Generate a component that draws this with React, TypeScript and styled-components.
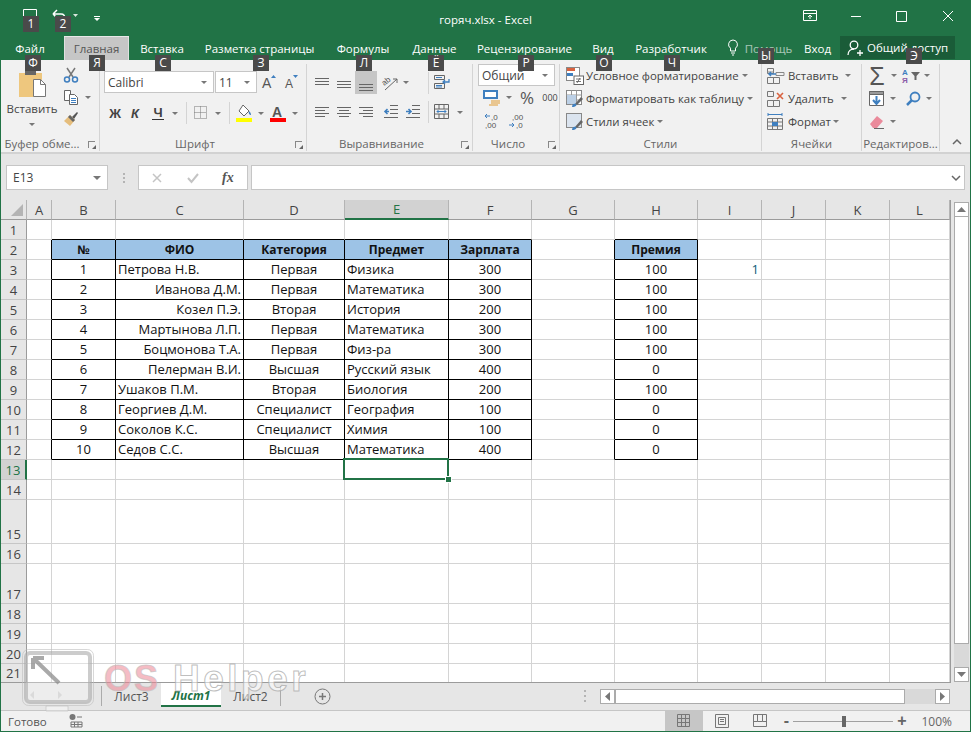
import React from 'react';
import styled, { createGlobalStyle } from 'styled-components';

const GlobalStyle = createGlobalStyle`
  html, body {
    margin: 0;
    padding: 0;
    background: #fff;
    overflow: hidden;
  }
  body {
    font-family: "Open Sans", "Noto Sans", sans-serif;
    font-size: 11.5px;
    color: #444;
  }
`;

const GREEN = '#217346';

const Window = styled.div`
  position: relative;
  width: 971px;
  height: 732px;
  box-sizing: border-box;
  border: 1px solid ${GREEN};
  border-top: 0;
  background: #e6e6e6;
  display: flex;
  flex-direction: column;
  overflow: hidden;
`;

/* title bar */
const TitleBar = styled.div`
  height: 36px;
  margin: 0 -1px;
  background: ${GREEN};
  display: grid;
  grid-template-columns: 1fr auto 1fr;
  align-items: center;
  color: #fff;
`;
const Quick = styled.div`
  display: flex;
  align-items: flex-start;
  align-self: start;
  padding: 9px 0 0 23px;
  gap: 15px;
`;
const DocTitle = styled.div`
  margin-top: 2px;
`;
const WinButtons = styled.div`
  display: flex;
  justify-content: flex-end;
  align-items: center;
  padding: 0 17px 4px 0;
  gap: 33px;
`;

/* tabs */
const TabBar = styled.div`
  height: 24px;
  margin: 0 -1px;
  background: ${GREEN};
  display: flex;
  align-items: stretch;
  padding-left: 14px;
  color: #fff;
`;
const Tab = styled.div<{ $active?: boolean; $w: number; $gap?: number }>`
  width: ${p => p.$w}px;
  margin-right: ${p => p.$gap ?? 0}px;
  display: flex;
  align-items: center;
  justify-content: center;
  white-space: nowrap;
  ${p => p.$active && 'background: #c6c6c6; color: #555; box-shadow: inset 0 1px 0 #e8e8e8, inset 1px 0 0 #e0e0e0, inset -1px 0 0 #e0e0e0;'}
`;
const Faded = styled.span`
  opacity: 0.6;
  margin-left: 6px;
`;
const Lamp = styled.div`
  display: flex;
  align-items: center;
`;
const ShareTab = styled.div`
  width: 115px;
  margin-left: 10px;
  display: flex;
  align-items: center;
  gap: 4px;
  padding-left: 7px;
  box-sizing: border-box;
  background: #1a5c38;
  height: 23px;
`;

/* ribbon */
const Ribbon = styled.div`
  height: 92px;
  background: #f1f1f1;
  border-bottom: 2px solid #d2d2d2;
  box-sizing: content-box;
  display: flex;
  position: relative;
`;
const Group = styled.div<{ $w: number }>`
  position: relative;
  width: ${p => p.$w}px;
  flex: none;
  box-sizing: border-box;
  margin-top: 4px;
  height: 87px;
  border-right: 1px solid #d4d4d4;
  display: flex;
  flex-direction: column;
`;
const GroupBody = styled.div`
  flex: 1;
  display: flex;
  min-height: 0;
`;
const GroupLabel = styled.div<{ $launcher?: boolean }>`
  height: 14px;
  line-height: 14px;
  text-align: center;
  white-space: nowrap;
  color: #666;
  ${p => p.$launcher && 'padding-right: 16px;'}
`;
const Launcher = styled.span`
  position: absolute;
  right: 4px;
  bottom: 3px;
  width: 7px;
  height: 7px;
  border-left: 1px solid #888;
  border-top: 1px solid #888;
  box-sizing: border-box;
  &::after {
    content: '';
    position: absolute;
    right: -1px;
    bottom: -1px;
    width: 0;
    height: 0;
    border-left: 4px solid transparent;
    border-bottom: 4px solid #666;
  }
`;
const Stack = styled.div<{ $w?: number; $top?: number; $gap?: number; $left?: number }>`
  display: flex;
  flex-direction: column;
  flex: none;
  box-sizing: border-box;
  ${p => p.$w && `width: ${p.$w}px;`}
  padding-top: ${p => p.$top ?? 0}px;
  padding-left: ${p => p.$left ?? 0}px;
  gap: ${p => p.$gap ?? 0}px;
`;
const Row = styled.div<{ $h?: number; $left?: number }>`
  display: flex;
  flex: none;
  align-items: center;
  height: ${p => p.$h ?? 23}px;
  padding-left: ${p => p.$left ?? 0}px;
  white-space: nowrap;
`;
const Tool = styled.div<{ $w: number; $h?: number; $on?: boolean; $ml?: number }>`
  width: ${p => p.$w}px;
  height: ${p => p.$h ?? 22}px;
  margin-left: ${p => p.$ml ?? 0}px;
  flex: none;
  display: flex;
  align-items: center;
  justify-content: center;
  ${p => p.$on && 'background: #c6c6c6;'}
`;
const Caret = styled.span<{ $mx?: number; $big?: boolean }>`
  flex: none;
  width: 0;
  height: 0;
  margin: 0 ${p => p.$mx ?? 3}px;
  border-left: ${p => (p.$big ? 4 : 3)}px solid transparent;
  border-right: ${p => (p.$big ? 4 : 3)}px solid transparent;
  border-top: ${p => (p.$big ? 4 : 3)}px solid #777;
`;
const VSep = styled.span`
  width: 1px;
  height: 22px;
  background: #d4d4d4;
  flex: none;
`;
const PasteText = styled.div`
  text-align: center;
  line-height: 16px;
  margin-top: 2px;
`;
const PasteCaret = styled.div`
  display: flex;
  justify-content: center;
  margin-top: 6px;
`;
const ComboBox = styled.div<{ $w: number }>`
  width: ${p => p.$w}px;
  height: 22px;
  box-sizing: border-box;
  background: #fff;
  border: 1px solid #c6c6c6;
  display: flex;
  align-items: center;
  justify-content: space-between;
  padding: 0 3px;
  color: #444;
  margin-right: 1px;
  flex: none;
  font-size: 12px;
`;
const BoldLetter = styled.span<{ $italic?: boolean; $under?: boolean }>`
  font-family: "Liberation Sans", sans-serif;
  font-weight: 700;
  font-size: 13px;
  color: #444;
  ${p => p.$italic && 'font-style: italic;'}
  ${p => p.$under && 'border-bottom: 1px solid #333; line-height: 12px; padding: 0 1px;'}
`;
const Percent = styled.span`
  font-size: 17px;
  color: #555;
`;
const Thousands = styled.span`
  font-size: 9px;
`;
const Sigma = styled.span`
  font-family: "Liberation Sans", sans-serif;
  font-size: 25px;
  line-height: 22px;
  color: #555;
`;
const StyleText = styled.span<{ $w?: number }>`
  margin-left: 2px;
  color: #444;
  font-size: 11.4px;
  ${p => p.$w && `width: ${p.$w}px;`}
`;
const Collapse = styled.div`
  position: absolute;
  right: 8px;
  bottom: 3px;
`;

/* formula bar */
const FormulaBar = styled.div`
  height: 45px;
  display: flex;
  align-items: center;
  padding: 1px 5px 0 5px;
`;
const NameBox = styled.div`
  width: 102px;
  height: 25px;
  box-sizing: border-box;
  background: #fff;
  border: 1px solid #c6c6c6;
  display: flex;
  align-items: center;
  justify-content: space-between;
  padding: 0 3px 0 6px;
  font-size: 12px;
`;
const Dots = styled.div`
  width: 3px;
  display: flex;
  flex-direction: column;
  gap: 2px;
  span {
    display: block;
    width: 2px;
    height: 2px;
    background: #b4b4b4;
  }
`;
const FormulaDots = styled(Dots)`
  margin-left: 15px;
`;
const FxBox = styled.div`
  width: 110px;
  height: 25px;
  box-sizing: border-box;
  background: #fff;
  border: 1px solid #c6c6c6;
  margin: 0 3px 0 12px;
  display: flex;
  align-items: center;
  padding-left: 11px;
  gap: 22px;
`;
const Fx = styled.span`
  font-family: "Liberation Serif", serif;
  font-style: italic;
  font-weight: 700;
  font-size: 14px;
  color: #555;
`;
const FormulaInput = styled.div`
  flex: 1;
  height: 25px;
  box-sizing: border-box;
  background: #fff;
  border: 1px solid #c6c6c6;
  display: flex;
  align-items: center;
  justify-content: flex-end;
  padding-right: 3px;
`;

/* sheet */
const SheetArea = styled.div`
  height: 483px;
  display: flex;
`;
const CellGrid = styled.div`
  display: grid;
  grid-template-columns: 26px 25px 64px 128px 101px 104px 83px 83px 83px 64px 64px 64px 60px;
  grid-template-rows: 20px repeat(14, 20px) 44px 20px 40px 20px 20px 20px 19px;
  width: 949px;
  height: 482px;
  flex: none;
  overflow: hidden;
  border-right: 1px solid #9b9b9b;
  border-bottom: 1px solid #9b9b9b;
  box-sizing: content-box;
`;
const Corner = styled.div`
  background: #e6e6e6;
  border-right: 1px solid #b4b4b4;
  border-bottom: 1px solid #9b9b9b;
  box-sizing: border-box;
  position: relative;
  &::after {
    content: '';
    position: absolute;
    right: 3px;
    bottom: 3px;
    border-left: 12px solid transparent;
    border-bottom: 12px solid #b4b4b4;
  }
`;
const ColHead = styled.div<{ $on?: boolean }>`
  background: ${p => (p.$on ? '#d2d2d2' : '#e6e6e6')};
  color: ${p => (p.$on ? GREEN : '#444')};
  border-right: 1px solid #b4b4b4;
  border-bottom: ${p => (p.$on ? `2px solid ${GREEN}` : '1px solid #9b9b9b')};
  box-sizing: border-box;
  display: flex;
  align-items: center;
  justify-content: center;
  font-size: 13px;
`;
const RowHead = styled.div<{ $on?: boolean }>`
  background: ${p => (p.$on ? '#d2d2d2' : '#e6e6e6')};
  color: ${p => (p.$on ? GREEN : '#444')};
  border-right: ${p => (p.$on ? `2px solid ${GREEN}` : '1px solid #9b9b9b')};
  border-bottom: 1px solid #c6c6c6;
  box-sizing: border-box;
  display: flex;
  align-items: flex-end;
  justify-content: center;
  font-size: 13px;
  line-height: 18px;
`;
const Cell = styled.div<{
  $align: string;
  $head?: boolean;
  $right?: boolean;
  $bottom?: boolean;
  $selected?: boolean;
}>`
  position: relative;
  box-sizing: border-box;
  background: ${p => (p.$head ? '#9dc3e6' : '#fff')};
  border-right: 1px solid ${p => (p.$right ? '#000' : '#d4d4d4')};
  border-bottom: 1px solid ${p => (p.$bottom ? '#000' : '#d4d4d4')};
  display: flex;
  align-items: flex-end;
  justify-content: ${p => p.$align};
  padding: 0 2px;
  font-size: ${p => (p.$head ? 12 : 13)}px;
  line-height: 19px;
  color: #111;
  white-space: nowrap;
  ${p => p.$head && 'font-weight: 700;'}
  ${p =>
    p.$selected &&
    `&::after {
      content: '';
      position: absolute;
      left: -2px;
      top: -2px;
      right: -1px;
      bottom: -1px;
      border: 2px solid ${GREEN};
      z-index: 2;
    }
    &::before {
      content: '';
      position: absolute;
      right: -4px;
      bottom: -4px;
      width: 7px;
      height: 7px;
      background: ${GREEN};
      border: 1px solid #fff;
      box-sizing: border-box;
      z-index: 3;
    }`}
`;
const TealValue = styled.span`
  margin-left: auto;
  color: #0d5c7a;
`;
const VScroll = styled.div`
  width: 15px;
  margin-left: 3px;
  padding-top: 2px;
  box-sizing: border-box;
  display: flex;
  flex-direction: column;
  height: 482px;
`;
const ScrollBtn = styled.div<{ $w?: number; $h?: number }>`
  width: ${p => p.$w ?? 15}px;
  height: ${p => p.$h ?? 15}px;
  flex: none;
  box-sizing: border-box;
  background: #fff;
  border: 1px solid #ababab;
  display: flex;
  align-items: center;
  justify-content: center;
`;
const VThumb = styled.div`
  height: 427px;
  flex: none;
  background: #fff;
  box-sizing: border-box;
  border: 1px solid #ababab;
  border-top: 0;
`;
const VTrack = styled.div`
  flex: 1;
  background: #d9d9d9;
`;

/* sheet tabs */
const SheetTabs = styled.div`
  height: 27px;
  display: flex;
  align-items: flex-start;
  padding-left: 100px;
`;
const SheetTab = styled.div<{ $active?: boolean; $w: number; $plain?: boolean }>`
  width: ${p => p.$w}px;
  height: 20px;
  margin-top: 3px;
  box-sizing: border-box;
  display: flex;
  align-items: center;
  justify-content: center;
  font-size: 12px;
  color: #555;
  border-left: ${p => (p.$plain ? '0' : '1px solid #ababab')};
  ${p =>
    p.$active &&
    `background: #fff;
     height: 24px;
     margin-top: 0;
     color: ${GREEN};
     font-weight: 700;
     font-style: italic;
     border-left: 0;
     border-bottom: 2px solid ${GREEN};
     padding-top: 3px;`}
`;
const TabEnd = styled.span`
  width: 1px;
  height: 20px;
  margin-top: 3px;
  background: #ababab;
`;
const AddSheet = styled.div`
  margin-left: 33px;
  margin-top: 5px;
`;
const TabDots = styled(Dots)`
  margin-left: 253px;
  margin-top: 7px;
  gap: 3px;
`;
const HScroll = styled.div`
  margin-left: 13px;
  margin-top: 6px;
  display: flex;
  width: 350px;
  height: 15px;
`;
const HThumb = styled.div`
  width: 290px;
  background: #fff;
  box-sizing: border-box;
  border: 1px solid #ababab;
`;
const HTrack = styled.div`
  flex: 1;
  background: #d9d9d9;
`;

/* status */
const StatusBar = styled.div`
  flex: 1;
  background: #f1f1f1;
  border-top: 1px solid #c6c6c6;
  display: flex;
  align-items: center;
  padding-left: 7px;
`;
const Ready = styled.span`
  color: #555;
`;
const MacroIcon = styled.div`
  margin-left: 22px;
  display: flex;
`;
const ViewGroup = styled.div`
  margin-left: auto;
  display: flex;
  align-items: stretch;
  height: 100%;
`;
const ViewBtn = styled.div<{ $on?: boolean }>`
  width: 38px;
  display: flex;
  align-items: center;
  justify-content: center;
  ${p => p.$on && 'background: #c6c6c6;'}
`;
const Zoom = styled.div`
  display: flex;
  align-items: center;
  margin-left: 5px;
  gap: 4px;
`;
const ZoomTrack = styled.div`
  position: relative;
  width: 100px;
  height: 1px;
  background: #a0a0a0;
  &::after {
    content: '';
    position: absolute;
    left: 49px;
    top: -5px;
    width: 4px;
    height: 11px;
    background: #666;
  }
`;
const ZoomSign = styled.span`
  font-family: "Liberation Sans", sans-serif;
  font-size: 16px;
  font-weight: 700;
  color: #666;
  line-height: 14px;
`;
const ZoomValue = styled.span`
  align-self: center;
  margin: 0 18px 0 15px;
  color: #666;
  font-size: 12px;
`;

/* overlays */
const KeyTip = styled.div<{ $x: number; $y: number }>`
  position: absolute;
  left: ${p => p.$x - 1}px;
  top: ${p => p.$y}px;
  width: 16px;
  height: 16px;
  background: #4a4a4a;
  color: #fff;
  font-size: 12px;
  line-height: 16px;
  text-align: center;
  z-index: 10;
`;
const Mark = styled.div`
  position: absolute;
  left: 21px;
  top: 649px;
  display: flex;
  align-items: flex-start;
  pointer-events: none;
  z-index: 9;
`;
const MarkOs = styled.span`
  font-family: "Liberation Sans", sans-serif;
  font-weight: 700;
  font-size: 36px;
  line-height: 36px;
  letter-spacing: 2px;
  margin: 12px 0 0 8px;
  color: rgba(238, 130, 145, 0.55);
  -webkit-text-stroke: 1px rgba(190, 190, 190, 0.6);
`;
const MarkHelper = styled.span`
  font-family: "Liberation Sans", sans-serif;
  font-weight: 700;
  font-size: 37px;
  line-height: 36px;
  letter-spacing: 3.5px;
  margin: 12px 0 0 13px;
  color: rgba(255, 255, 255, 0.55);
  -webkit-text-stroke: 1px rgba(170, 170, 170, 0.75);
`;
const Svg = styled.svg`
  overflow: visible;
  flex: none;
`;

type IconProps = { children: React.ReactNode; w?: number; h?: number };
const Ic = ({ children, w = 16, h = 16 }: IconProps) => (
  <Svg width={w} height={h} viewBox={`0 0 ${w} ${h}`} fill="none">
    {children}
  </Svg>
);

const GR = '#666';
const BL = '#3f7fbf';

const Lines = ({ ys, spans }: { ys: number[]; spans: [number, number][] }) => (
  <Ic>
    {ys.map((y, i) => (
      <path key={y} d={`M${spans[i][0]} ${y + 0.5}H${spans[i][1]}`} stroke={GR} />
    ))}
  </Ic>
);
const IndentIcon = ({ right }: { right?: boolean }) => (
  <Ic>
    <path d="M7 1.500H15M7 5.500H15M7 9.500H15M1 13.500H15" stroke={GR} />
    <path
      d={right ? 'M1 7.500H5M3.500 5L6 7.500 3.500 10' : 'M6 7.500H2M4.500 5L2 7.500 4.500 10'}
      stroke={BL}
      strokeWidth="1.600"
    />
  </Ic>
);
const TableStyleIcon = ({ plain }: { plain?: boolean }) => (
  <Ic w={18} h={18}>
    <rect x=".5" y=".5" width="15" height="14" fill={plain ? '#dbe4ef' : '#fff'} stroke="#888" />
    {!plain && <path d="M.5 5H15.500M.5 10H15.500M5.500 .5V15M10.500 .5V15" stroke="#999" />}
    {!plain && <rect x="1" y="5" width="9" height="9" fill="#bcd0e6" />}
    <path d="M9 14L15 7l2 2-6 6z" fill="#666" />
    <path d="M6 17c0-3 2-4 4-3 1 1 0 3-4 3z" fill={BL} />
  </Ic>
);
const CellIcon = ({ children }: { children?: React.ReactNode }) => (
  <Ic w={20} h={18}>
    <path d="M1.500 1.500h6v5h-6zM1.500 10.500h6v6h-6zM7.500 10.500h6v6h-6z" stroke="#777" />
    {children}
  </Ic>
);

const keyTips: [string, number, number][] = [
  ['1', 23, 16],
  ['2', 55, 16],
  ['Ф', 25, 55],
  ['Я', 89, 55],
  ['С', 155, 55],
  ['З', 253, 55],
  ['Л', 356, 55],
  ['Ё', 428, 55],
  ['Р', 518, 55],
  ['О', 596, 55],
  ['Ч', 664, 55],
  ['Ы', 758, 48],
  ['Э', 906, 48],
];

const colNames = ['A', 'B', 'C', 'D', 'E', 'F', 'G', 'H', 'I', 'J', 'K', 'L'];
const rowCount = 21;

const tableRows: string[][] = [
  ['№', 'ФИО', 'Категория', 'Предмет', 'Зарплата', '', 'Премия'],
  ['1', 'Петрова Н.В.', 'Первая', 'Физика', '300', '', '100'],
  ['2', 'Иванова Д.М.', 'Первая', 'Математика', '300', '', '100'],
  ['3', 'Козел П.Э.', 'Вторая', 'История', '200', '', '100'],
  ['4', 'Мартынова Л.П.', 'Первая', 'Математика', '300', '', '100'],
  ['5', 'Боцмонова Т.А.', 'Первая', 'Физ-ра', '300', '', '100'],
  ['6', 'Пелерман В.И.', 'Высшая', 'Русский язык', '400', '', '0'],
  ['7', 'Ушаков П.М.', 'Вторая', 'Биология', '200', '', '100'],
  ['8', 'Георгиев Д.М.', 'Специалист', 'География', '100', '', '0'],
  ['9', 'Соколов К.С.', 'Специалист', 'Химия', '100', '', '0'],
  ['10', 'Седов С.С.', 'Высшая', 'Математика', '400', '', '0'],
];
const rightNames = new Set([2, 3, 4, 5, 6]);

// B..F and H hold the bordered table, rows 2..12
const inTable = (r: number, c: number) => r >= 2 && r <= 12 && ((c >= 1 && c <= 5) || c === 7);

const cellText = (r: number, c: number) => {
  if (r < 2 || r > 12 || c < 1 || c > 7) return '';
  return tableRows[r - 2][c - 1];
};
const cellAlign = (r: number, c: number) => {
  if (r === 2) return 'center';
  if (c === 2) return rightNames.has(r - 2) ? 'flex-end' : 'flex-start';
  if (c === 4) return 'flex-start';
  return 'center';
};

const Sheet = () => {
  const cells: React.ReactNode[] = [];
  cells.push(<Corner key="corner" />);
  colNames.forEach(n =>
    cells.push(
      <ColHead key={n} $on={n === 'E'}>
        {n}
      </ColHead>
    )
  );
  for (let r = 1; r <= rowCount; r++) {
    cells.push(
      <RowHead key={`h${r}`} $on={r === 13}>
        {r}
      </RowHead>
    );
    colNames.forEach((n, c) => {
      const on = inTable(r, c);
      cells.push(
        <Cell
          key={`${n}${r}`}
          $align={cellAlign(r, c)}
          $head={on && r === 2}
          $right={on || inTable(r, c + 1)}
          $bottom={on || inTable(r + 1, c)}
          $selected={r === 13 && c === 4}
        >
          {cellText(r, c)}
          {r === 3 && n === 'I' && <TealValue>1</TealValue>}
        </Cell>
      );
    });
  }
  return <CellGrid>{cells}</CellGrid>;
};

const App = () => (
  <>
    <GlobalStyle />
    <Window>
      <TitleBar>
        <Quick>
          <Ic w={14} h={14}>
            <path d="M.5 .5h13v13h-13z" stroke="#fff" />
          </Ic>
          <Ic w={26} h={14}>
            <path d="M1 5h8c3 0 4 2 4 5M1 5l4-4M1 5l4 4" stroke="#fff" strokeWidth="1.500" />
            <path d="M21 5h5l-2.500 3z" fill="#d8e6dd" />
          </Ic>
          <Ic w={8} h={14}>
            <path d="M1 7.500h6" stroke="#fff" />
            <path d="M1 9h6l-3 3z" fill="#fff" />
          </Ic>
        </Quick>
        <DocTitle>горяч.xlsx - Excel</DocTitle>
        <WinButtons>
          <Ic w={14} h={12}>
            <path d="M.5 .5h13v10h-13zM.5 3.500h13M7 9V5M5 7l2-2 2 2" stroke="#fff" />
          </Ic>
          <Ic w={12} h={12}>
            <path d="M1 6.500h10" stroke="#fff" />
          </Ic>
          <Ic w={14} h={14}>
            <path d="M1.500 2.500h10v10h-10z" stroke="#fff" />
          </Ic>
          <Ic w={12} h={12}>
            <path d="M1 1l10 10M11 1L1 11" stroke="#fff" />
          </Ic>
        </WinButtons>
      </TitleBar>

      <TabBar>
        <Tab $w={32} $gap={18}>Файл</Tab>
        <Tab $w={65} $active $gap={12}>Главная</Tab>
        <Tab $w={42} $gap={23}>Вставка</Tab>
        <Tab $w={107} $gap={23}>Разметка страницы</Tab>
        <Tab $w={54} $gap={23}>Формулы</Tab>
        <Tab $w={43} $gap={23}>Данные</Tab>
        <Tab $w={91} $gap={23}>Рецензирование</Tab>
        <Tab $w={20} $gap={23}>Вид</Tab>
        <Tab $w={70} $gap={21}>Разработчик</Tab>
        <Lamp>
          <Ic w={12} h={18}>
            <path
              d="M6 1a4.500 4.500 0 0 0-2.500 8.200V12h5V9.200A4.500 4.500 0 0 0 6 1zM4 14h4M5 16h2"
              stroke="#fff"
            />
          </Ic>
        </Lamp>
        <Tab $w={53} $gap={13}><Faded>Помощь</Faded></Tab>
        <Tab $w={25}>Вход</Tab>
        <ShareTab>
          <Ic w={16} h={18}>
            <circle cx="7" cy="6" r="3.800" stroke="#fff" strokeWidth="1.300" />
            <path d="M1 16c0-4 3-6 6-6M10 14h6M13 11v6" stroke="#fff" strokeWidth="1.300" />
          </Ic>
          Общий доступ
        </ShareTab>
      </TabBar>

      <Ribbon>
        <Group $w={99}>
          <GroupBody>
            <Stack $w={57} $top={5} $left={5}>
              <Tool $w={52} $h={30}>
                <Ic w={30} h={28}>
                  <rect x="2" y="3" width="23" height="24" fill="#eec77e" />
                  <rect x="8" y="0" width="11" height="5" fill="#666" />
                  <path d="M16.500 9.500h7l5 5v12h-12z" fill="#fff" stroke="#777" />
                  <path d="M23.500 9.500v5h5" stroke="#777" />
                </Ic>
              </Tool>
              <PasteText>Вставить</PasteText>
              <PasteCaret>
                <Caret />
              </PasteCaret>
            </Stack>
            <Stack $w={41} $left={4}>
              <Row $h={22}>
                <Tool $w={18}>
                  <Ic>
                    <path d="M4 1l6 9M12 1L6 10" stroke="#777" strokeWidth="1.500" />
                    <circle cx="4" cy="12.500" r="2.500" stroke={BL} strokeWidth="1.500" />
                    <circle cx="12" cy="12.500" r="2.500" stroke={BL} strokeWidth="1.500" />
                  </Ic>
                </Tool>
              </Row>
              <Row $h={22}>
                <Tool $w={18}>
                  <Ic>
                    <path d="M1.500 1.500h6v10h-6z" stroke="#666" fill="#fff" />
                    <path d="M6.500 5.500h5l3 3v7h-8z" stroke="#666" fill="#fff" />
                    <path d="M8 9.500h5M8 11.500h5M8 13.500h5" stroke={BL} />
                  </Ic>
                </Tool>
                <Caret $mx={5} />
              </Row>
              <Row $h={22}>
                <Tool $w={18}>
                  <Ic>
                    <path d="M9 6l5-5 1 1-4 6z" fill="#555" />
                    <path d="M7 4l5 5-5 6-6-5z" fill="#e5bd7c" />
                    <path d="M7 4l5 5-2 2-5-5z" fill="#666" />
                  </Ic>
                </Tool>
              </Row>
            </Stack>
          </GroupBody>
          <GroupLabel $launcher>Буфер обме...</GroupLabel>
          <Launcher />
        </Group>

        <Group $w={207}>
          <GroupBody>
            <Stack $left={4} $top={7} $gap={8}>
              <Row $h={22}>
                <ComboBox $w={110}>
                  Calibri
                  <Caret />
                </ComboBox>
                <ComboBox $w={42}>
                  11
                  <Caret />
                </ComboBox>
                <Tool $w={22}>
                  <Ic>
                    <text x="1" y="14" fontFamily="Liberation Sans" fontSize="14" fill="#555">A</text>
                    <path d="M10 4h5l-2.500-3z" fill={BL} />
                  </Ic>
                </Tool>
                <Tool $w={22}>
                  <Ic>
                    <text x="2" y="14" fontFamily="Liberation Sans" fontSize="12" fill="#555">A</text>
                    <path d="M10 1h5l-2.500 3z" fill={BL} />
                  </Ic>
                </Tool>
              </Row>
              <Row $h={24} $left={1}>
                <Tool $w={20}><BoldLetter>Ж</BoldLetter></Tool>
                <Tool $w={20}><BoldLetter $italic>К</BoldLetter></Tool>
                <Tool $w={26}><BoldLetter $under>Ч</BoldLetter></Tool>
                <Caret $mx={1} />
                <Tool $w={7} />
                <VSep />
                <Tool $w={28}>
                  <Ic>
                    <path
                      d="M1.500 1.500h12v12h-12zM7.500 1.500v12M1.500 7.500h12"
                      stroke="#777"
                      strokeDasharray="1 1"
                    />
                  </Ic>
                </Tool>
                <Caret $mx={0} />
                <Tool $w={8} />
                <VSep />
                <Tool $w={28}>
                  <Ic w={18} h={18}>
                    <path d="M8 1l6 6-5 5-5-5z" fill="#fff" stroke="#666" />
                    <path d="M14 7c2 2 2 3 2 4-1 0-3-1-2-4z" fill={BL} />
                    <rect x="1" y="14" width="16" height="4" fill="#ffff00" />
                  </Ic>
                </Tool>
                <Caret $mx={0} />
                <Tool $w={28}>
                  <Ic w={18} h={18}>
                    <text x="3" y="13" fontFamily="Liberation Sans" fontWeight="700" fontSize="14" fill="#555">A</text>
                    <rect x="1" y="14" width="16" height="4" fill="#ff0000" />
                  </Ic>
                </Tool>
                <Caret $mx={0} />
              </Row>
            </Stack>
          </GroupBody>
          <GroupLabel $launcher>Шрифт</GroupLabel>
          <Launcher />
        </Group>

        <Group $w={166}>
          <GroupBody>
            <Stack $left={4} $top={7} $gap={7}>
              <Row $h={23}>
                <Tool $w={22}><Lines ys={[3, 6, 9]} spans={[[1, 15], [1, 15], [1, 15]]} /></Tool>
                <Tool $w={22}><Lines ys={[6, 9, 12]} spans={[[1, 15], [1, 15], [1, 15]]} /></Tool>
                <Tool $w={22} $h={23} $on><Lines ys={[9, 12, 15]} spans={[[1, 15], [1, 15], [1, 15]]} /></Tool>
                <Tool $w={26}>
                  <Ic w={18} h={18}>
                    <text x="1" y="10" fontFamily="Liberation Sans" fontSize="8" fill="#555" transform="rotate(-40 5 8)">ab</text>
                    <path d="M4 16L16 5M12 5h4v4" stroke="#666" />
                  </Ic>
                </Tool>
                <Caret $mx={0} />
                <Tool $w={19} />
                <VSep />
                <Tool $w={26}>
                  <Ic w={18} h={18}>
                    <path d="M1.500 1.500h10v4h-10zM1.500 9.500h10v5h-10z" stroke="#666" />
                    <path d="M3 3.500h6M3 11.500h6M3 13h6" stroke={BL} />
                    <path d="M16 5v3h-6M12 6L10 8l2 2" stroke={BL} strokeWidth="1.300" />
                  </Ic>
                </Tool>
              </Row>
              <Row $h={22}>
                <Tool $w={22}><Lines ys={[3, 6, 9, 12]} spans={[[1, 15], [1, 11], [1, 15], [1, 11]]} /></Tool>
                <Tool $w={22}><Lines ys={[3, 6, 9, 12]} spans={[[1, 15], [3, 13], [1, 15], [3, 13]]} /></Tool>
                <Tool $w={22}><Lines ys={[3, 6, 9, 12]} spans={[[1, 15], [5, 15], [1, 15], [5, 15]]} /></Tool>
                <Tool $w={28}><IndentIcon /></Tool>
                <Tool $w={16}><IndentIcon right /></Tool>
                <Tool $w={7} />
                <VSep />
                <Tool $w={26}>
                  <Ic w={16} h={16}>
                    <path d="M.5 .5h14v14h-14zM.5 5H15M.5 10H15M5 .5V5M10 .5V5M5 10v5M10 10v5" stroke="#666" />
                    <path d="M3 7.500h9M4.500 6L3 7.500 4.500 9M10.500 6L12 7.500 10.500 9" stroke={BL} />
                  </Ic>
                </Tool>
                <Caret $mx={2} />
              </Row>
            </Stack>
          </GroupBody>
          <GroupLabel $launcher>Выравнивание</GroupLabel>
          <Launcher />
        </Group>

        <Group $w={87}>
          <GroupBody>
            <Stack $left={5}>
              <ComboBox $w={77}>
                Общий
                <Caret />
              </ComboBox>
              <Row $h={23} $left={3}>
                <Tool $w={22}>
                  <Ic w={18} h={16}>
                    <rect x="1" y="1" width="13" height="7" fill="#fff" stroke={BL} strokeWidth="2" />
                    <path d="M8 11h9M8 13h9M6 15h9" stroke="#e6b870" strokeWidth="1.500" />
                  </Ic>
                </Tool>
                <Caret $mx={3} />
                <Tool $w={24}>
                  <Percent>%</Percent>
                </Tool>
                <Tool $w={22}>
                  <Thousands>000</Thousands>
                </Tool>
              </Row>
              <Row $h={23} $left={2}>
                <Tool $w={24}>
                  <Ic>
                    <path d="M6 3H1M3 1L1 3l2 2" stroke={BL} />
                    <text x="7" y="7" fontFamily="Liberation Sans" fontSize="8" fill="#555">,0</text>
                    <text x="1" y="15" fontFamily="Liberation Sans" fontSize="8" fill="#555">,00</text>
                  </Ic>
                </Tool>
                <Tool $w={24}>
                  <Ic>
                    <text x="4" y="7" fontFamily="Liberation Sans" fontSize="8" fill="#555">,00</text>
                    <text x="8" y="15" fontFamily="Liberation Sans" fontSize="8" fill="#555">,0</text>
                    <path d="M1 12h5M4 10l2 2-2 2" stroke={BL} />
                  </Ic>
                </Tool>
              </Row>
            </Stack>
          </GroupBody>
          <GroupLabel $launcher>Число</GroupLabel>
          <Launcher />
        </Group>

        <Group $w={202}>
          <GroupBody>
            <Stack $left={6}>
              <Row>
                <Ic w={18} h={18}>
                  <rect x=".5" y=".5" width="13" height="13" fill="#fff" stroke="#888" />
                  <rect x="1" y="1" width="8" height="3" fill="#d9623f" />
                  <rect x="1" y="6" width="6" height="3" fill={BL} />
                  <rect x="8" y="9" width="9.500" height="8.500" fill="#fff" stroke="#666" />
                  <path d="M10 12h5M10 14.500h5M14 11l-3 5" stroke="#555" strokeWidth=".8" />
                </Ic>
                <StyleText>Условное форматирование</StyleText>
                <Caret />
              </Row>
              <Row>
                <TableStyleIcon />
                <StyleText>Форматировать как таблицу</StyleText>
                <Caret />
              </Row>
              <Row>
                <TableStyleIcon plain />
                <StyleText>Стили ячеек</StyleText>
                <Caret />
              </Row>
            </Stack>
          </GroupBody>
          <GroupLabel>Стили</GroupLabel>
        </Group>

        <Group $w={100}>
          <GroupBody>
            <Stack $left={4}>
              <Row>
                <CellIcon>
                  <path d="M10 5.500h8v3h-8zM1 5h7" stroke="#888" />
                  <path d="M10 7H3M5 5L3 7l2 2" stroke={BL} strokeWidth="1.500" />
                </CellIcon>
                <StyleText $w={54}>Вставить</StyleText>
                <Caret />
              </Row>
              <Row>
                <CellIcon>
                  <path d="M11 3l6 6M17 3l-6 6" stroke="#d9623f" strokeWidth="1.600" />
                </CellIcon>
                <StyleText $w={50}>Удалить</StyleText>
                <Caret />
              </Row>
              <Row>
                <Ic w={20} h={18}>
                  <path d="M2 1.500h14M2 0v3M16 0v3" stroke={BL} />
                  <path d="M1.500 5.500h15v11h-15zM1.500 9H16.500M1.500 13H16.500M6.500 5.500v11M11.500 5.500v11" stroke="#777" />
                  <rect x="6" y="9" width="6" height="4" fill={BL} />
                </Ic>
                <StyleText>Формат</StyleText>
                <Caret $mx={2} />
              </Row>
            </Stack>
          </GroupBody>
          <GroupLabel>Ячейки</GroupLabel>
        </Group>

        <Group $w={78}>
          <GroupBody>
            <Stack $left={6}>
              <Row>
                <Tool $w={18}>
                  <Sigma>Σ</Sigma>
                </Tool>
                <Caret $mx={5} />
                <Tool $w={18} $ml={1}>
                  <Ic w={20} h={18}>
                    <text x="0" y="8" fontFamily="Liberation Sans" fontWeight="700" fontSize="8" fill={BL}>А</text>
                    <text x="0" y="16" fontFamily="Liberation Sans" fontWeight="700" fontSize="8" fill="#8a5ca8">Я</text>
                    <path d="M9 5h9l-3.500 4v4h-2V9z" fill="#666" />
                  </Ic>
                </Tool>
                <Caret $mx={3} />
              </Row>
              <Row>
                <Tool $w={18}>
                  <Ic>
                    <path d="M.5 .5h14v14h-14z" fill="#fff" stroke="#666" />
                    <path d="M.5 .5h14v3h-14z" fill="#999" stroke="#666" />
                    <path d="M7.500 5v8M4 9l3.500 4L11 9" stroke={BL} strokeWidth="2" />
                  </Ic>
                </Tool>
                <Caret $mx={4} />
                <Tool $w={20} $ml={3}>
                  <Ic>
                    <circle cx="10" cy="6" r="4.500" stroke={BL} strokeWidth="1.800" />
                    <path d="M7 9l-5 5" stroke={BL} strokeWidth="2.500" />
                  </Ic>
                </Tool>
                <Caret $mx={3} />
              </Row>
              <Row>
                <Tool $w={18}>
                  <Ic>
                    <path d="M1 10l7-8 6 5-6 7H4z" fill="#ea8a9b" />
                    <path d="M5 14.500h10" stroke="#666" />
                  </Ic>
                </Tool>
                <Caret $mx={4} />
              </Row>
            </Stack>
          </GroupBody>
          <GroupLabel>Редактиров...</GroupLabel>
        </Group>

        <Collapse>
          <Ic w={10} h={8}>
            <path d="M1 6l4-4 4 4" stroke="#666" strokeWidth="1.500" />
          </Ic>
        </Collapse>
      </Ribbon>

      <FormulaBar>
        <NameBox>
          E13
          <Caret $big />
        </NameBox>
        <FormulaDots>
          <span />
          <span />
          <span />
        </FormulaDots>
        <FxBox>
          <Ic w={14} h={14}>
            <path d="M3 3l8 8M11 3l-8 8" stroke="#c4c4c4" strokeWidth="1.500" />
          </Ic>
          <Ic w={14} h={14}>
            <path d="M2 7l3.500 4L12 3" stroke="#c4c4c4" strokeWidth="2" />
          </Ic>
          <Fx>fx</Fx>
        </FxBox>
        <FormulaInput>
          <Ic w={10} h={8}>
            <path d="M1 2l4 4 4-4" stroke="#666" strokeWidth="1.500" />
          </Ic>
        </FormulaInput>
      </FormulaBar>

      <SheetArea>
        <Sheet />
        <VScroll>
          <ScrollBtn>
            <Ic w={9} h={5}>
              <path d="M0 5h9L4.500 0z" fill="#777" />
            </Ic>
          </ScrollBtn>
          <VThumb />
          <VTrack />
          <ScrollBtn>
            <Ic w={9} h={5}>
              <path d="M0 0h9L4.500 5z" fill="#777" />
            </Ic>
          </ScrollBtn>
        </VScroll>
      </SheetArea>

      <SheetTabs>
        <SheetTab $w={60}>Лист3</SheetTab>
        <SheetTab $w={60} $active>Лист1</SheetTab>
        <SheetTab $w={59} $plain>Лист2</SheetTab>
        <TabEnd />
        <AddSheet>
          <Ic w={17} h={17}>
            <circle cx="8.500" cy="8.500" r="7.500" stroke="#777" />
            <path d="M5 8.500h7M8.500 5v7" stroke="#777" strokeWidth="1.500" />
          </Ic>
        </AddSheet>
        <TabDots>
          <span />
          <span />
          <span />
        </TabDots>
        <HScroll>
          <ScrollBtn>
            <Ic w={5} h={9}>
              <path d="M5 0v9L0 4.500z" fill="#777" />
            </Ic>
          </ScrollBtn>
          <HThumb />
          <HTrack />
          <ScrollBtn>
            <Ic w={5} h={9}>
              <path d="M0 0v9l5-4.500z" fill="#777" />
            </Ic>
          </ScrollBtn>
        </HScroll>
      </SheetTabs>

      <StatusBar>
        <Ready>Готово</Ready>
        <MacroIcon>
          <Ic w={14} h={14}>
            <circle cx="3.500" cy="3" r="3" fill="#777" />
            <path d="M2 8h11v5H2zM8 3h5M2 10.500h11M5.500 8v5M9 8v5" stroke="#777" />
          </Ic>
        </MacroIcon>
        <ViewGroup>
          <ViewBtn $on>
            <Ic w={14} h={14}>
              <path d="M.5 .5h12v12h-12zM.5 4.500h12M.5 8.500h12M4.500 .5v12M8.500 .5v12" stroke="#777" />
            </Ic>
          </ViewBtn>
          <ViewBtn>
            <Ic w={14} h={14}>
              <path d="M.5 .5h13v13h-13zM3.500 3.500h7v7h-7zM5 5.500h4M5 7.500h4" stroke="#777" />
            </Ic>
          </ViewBtn>
          <ViewBtn>
            <Ic w={14} h={14}>
              <path d="M.5 .5h13v12h-13zM.5 7.500h4v-7M4.500 7.500h5v-7M9.500 7.500h4" stroke="#777" />
            </Ic>
          </ViewBtn>
          <Zoom>
            <ZoomSign>-</ZoomSign>
            <ZoomTrack />
            <ZoomSign>+</ZoomSign>
          </Zoom>
          <ZoomValue>100%</ZoomValue>
        </ViewGroup>
      </StatusBar>

      {keyTips.map(([t, x, y]) => (
        <KeyTip key={t} $x={x} $y={y}>
          {t}
        </KeyTip>
      ))}
      <Mark>
        <Ic w={74} h={62}>
          <rect x="4" y="4" width="64" height="49" rx="4" fill="rgba(255,255,255,.3)" stroke="rgba(170,170,170,.6)" strokeWidth="4" />
          <rect x="0.500" y="0.500" width="71" height="56" rx="6" stroke="rgba(190,190,190,.6)" />
          <path d="M24 57h22v5H24z" stroke="rgba(190,190,190,.6)" fill="rgba(255,255,255,.4)" />
          <path d="M11 9l26 25M11 9v11M11 9h11" stroke="rgba(140,140,140,.75)" strokeWidth="4" />
          <path d="M12 42l-4 4 4 4zM36 42l4 4-4 4z" fill="rgba(190,190,190,.4)" />
        </Ic>
        <MarkOs>OS</MarkOs>
        <MarkHelper>Helper</MarkHelper>
      </Mark>
    </Window>
  </>
);

export default App;
